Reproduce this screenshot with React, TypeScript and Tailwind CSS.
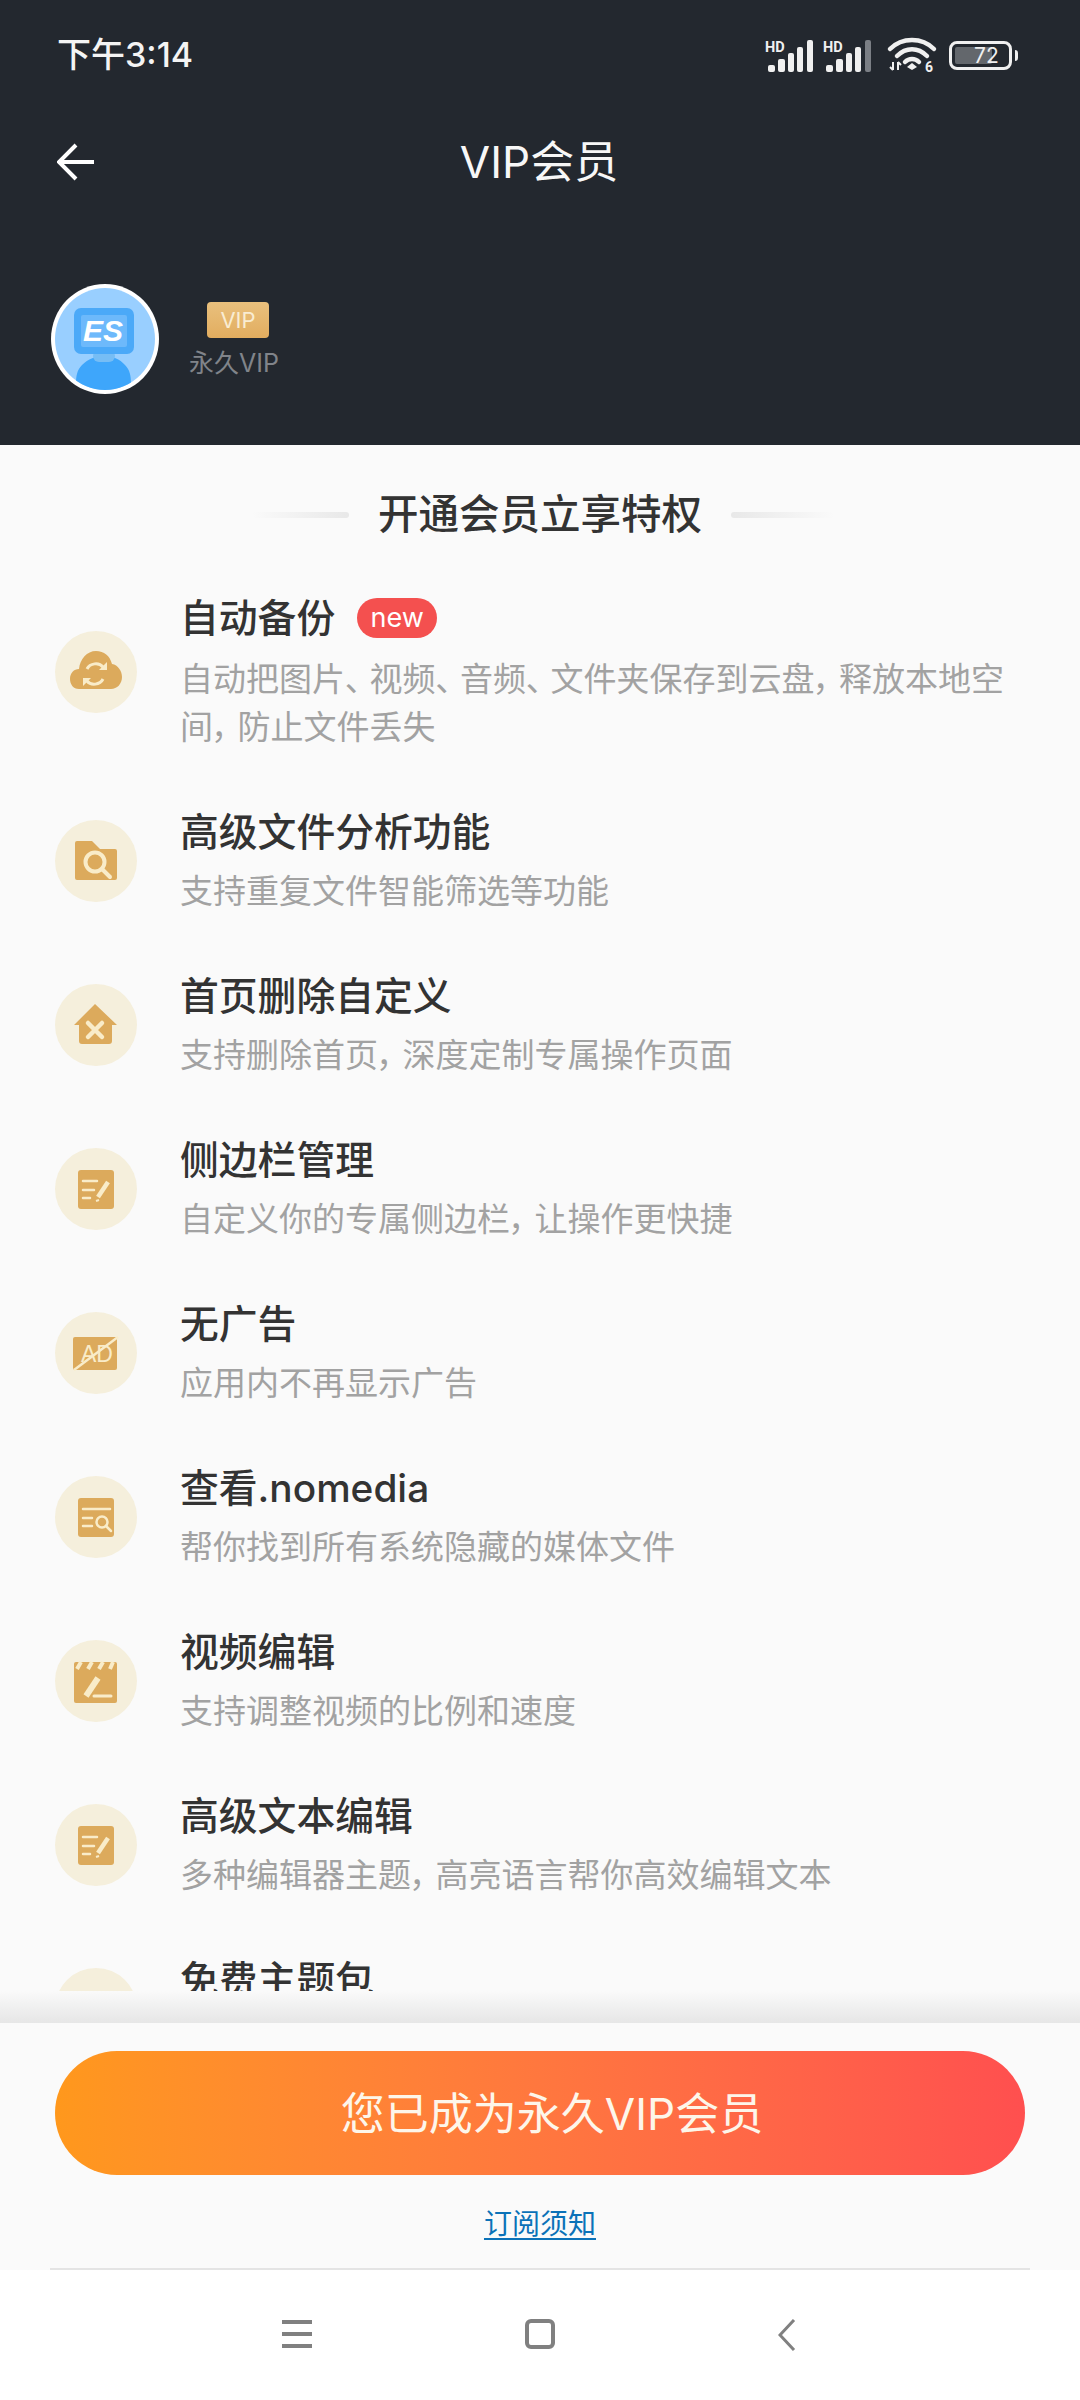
import React from "react";

const F = "#dcaa5c";
const L = "#f9ecc9";

const Signal = ({ dim }: { dim?: boolean }) => (
  <svg width="50" height="33" viewBox="0 0 50 33">
    <text x="0" y="13" fontSize="14.5" fontWeight="700" fontFamily="Roboto, sans-serif" fill="#f0f0f0">HD</text>
    <rect x="3" y="26" width="7" height="7" rx="2" fill="#f0f0f0" />
    <rect x="13" y="20" width="7" height="13" rx="2" fill="#f0f0f0" />
    <rect x="23" y="14" width="6" height="19" rx="2" fill="#f0f0f0" />
    <rect x="32" y="8" width="6" height="25" rx="2" fill="#f0f0f0" />
    <rect x="42" y="1" width="6" height="32" rx="2" fill={dim ? "#7b7f85" : "#f0f0f0"} />
  </svg>
);

const Wifi = () => (
  <svg className="overflow-visible" width="48" height="36" viewBox="0 0 48 36" fill="none">
    <path d="M2 12C14 0 34 0 46 12" stroke="#f0f0f0" strokeWidth="4.5" strokeLinecap="round" />
    <path d="M9 19C18 10 30 10 39 19" stroke="#f0f0f0" strokeWidth="4.5" strokeLinecap="round" />
    <path d="M17 25C21 21 27 21 31 25" stroke="#f0f0f0" strokeWidth="4.5" strokeLinecap="round" />
    <path d="M24 26l5 4-5 3-5-3z" fill="#f0f0f0" />
    <path d="M5 25v8M2 30l3 3M10 33v-8M10 25l3 3" stroke="#f0f0f0" strokeWidth="2" />
    <text x="37" y="35" fontSize="14" fontWeight="700" fontFamily="Roboto, sans-serif" fill="#f0f0f0">6</text>
  </svg>
);

const Battery = () => (
  <div className="flex items-center gap-[3px]">
    <div className="flex h-[29px] w-[63px] items-center rounded-[8px] border-[3px] border-[#f0f0f0] p-[3px]">
      <div className="flex h-full w-[72%] items-center justify-end rounded-[2px] bg-[#63676c]">
        <span className="mr-[-7px] text-[21px] leading-none text-[#f0f0f0]">72</span>
      </div>
    </div>
    <div className="h-[11px] w-[3px] rounded-r bg-[#f0f0f0]" />
  </div>
);

const Avatar = () => (
  <svg width="108" height="110" viewBox="0 0 108 110">
    <clipPath id="avatarClip">
      <ellipse cx="54" cy="55" rx="50" ry="51" />
    </clipPath>
    <ellipse cx="54" cy="55" rx="54" ry="55" fill="#ffffff" />
    <ellipse cx="54" cy="55" rx="50" ry="51" fill="#99cfff" />
    <g clipPath="url(#avatarClip)">
      <path d="M25 100c0-8 1-14 6-19 6-6 14-9 22-9s16 3 21 9c5 5 6 11 6 19v10H25z" fill="#3ea6fb" />
      <rect x="42" y="66" width="22" height="12" rx="6" fill="#76bdf5" />
      <rect x="23" y="24" width="60" height="46" rx="7" fill="#4ba9f8" />
      <rect x="30" y="31" width="46" height="32" rx="2" fill="#6db9fb" />
      <text x="32" y="57" fontSize="30" fontWeight="800" fontStyle="italic" fontFamily="'Liberation Sans', sans-serif" fill="#ffffff">ES</text>
    </g>
  </svg>
);

const EditGlyph = () => (
  <>
    <rect x="23" y="22" width="36" height="39" rx="3" fill={F} />
    <path d="M28 33h14M28 42h11M28 50h7" stroke={L} strokeWidth="2.5" strokeLinecap="round" />
    <path d="M43 49L53 34" stroke={L} strokeWidth="4.5" />
    <path d="M41 53l3-1" stroke={L} strokeWidth="2" />
  </>
);

const glyphs: Record<string, React.ReactNode> = {
  cloud: (
    <>
      <path d="M24 58C18 58 15 53 15 48c0-6 4-10 9-10 1-10 8-18 17-18 8 0 14 5 16 13 6 1 10 7 10 13 0 7-5 12-11 12z" fill={F} />
      <path d="M32 38c3-6 12-7 16-2M48 48c-3 6-12 7-16 2" stroke={L} strokeWidth="3" fill="none" />
      <path d="M52 31v8h-8zM28 55v-8h8z" fill={L} />
    </>
  ),
  folder: (
    <>
      <path d="M20 23a2 2 0 0 1 2-2h15l8 8h15a2 2 0 0 1 2 2v27a2 2 0 0 1-2 2H22a2 2 0 0 1-2-2z" fill={F} />
      <circle cx="40" cy="42" r="9.5" stroke={L} strokeWidth="4" fill="none" />
      <path d="M47 49l8 8" stroke={L} strokeWidth="4" strokeLinecap="round" />
    </>
  ),
  house: (
    <>
      <path d="M40 20L62 41H57V57a3 3 0 0 1-3 3H27a3 3 0 0 1-3-3V41H19z" fill={F} />
      <path d="M33 39l14 14M47 39L33 53" stroke={L} strokeWidth="4.5" strokeLinecap="round" />
    </>
  ),
  edit: <EditGlyph />,
  ad: (
    <>
      <rect x="18" y="25" width="44" height="33" rx="2" fill={F} />
      <text x="26" y="50" fontSize="23" fontFamily="'Liberation Sans', sans-serif" fill={L}>AD</text>
      <path d="M19 58L63 25" stroke={L} strokeWidth="2.5" />
    </>
  ),
  nomedia: (
    <>
      <rect x="23" y="22" width="36" height="39" rx="3" fill={F} />
      <path d="M28 33h27M28 42h9M28 50h9" stroke={L} strokeWidth="2.5" strokeLinecap="round" />
      <circle cx="47" cy="46" r="5.5" stroke={L} strokeWidth="2.5" fill="none" />
      <path d="M51 50l5 5" stroke={L} strokeWidth="2.5" strokeLinecap="round" />
    </>
  ),
  video: (
    <>
      <rect x="19" y="22" width="43" height="41" rx="2" fill={F} />
      <path d="M22 29l4-7M33 29l4-7M44 29l4-7M55 29l3-7" stroke={L} strokeWidth="4" />
      <path d="M31 56l12-18" stroke={L} strokeWidth="6" />
      <path d="M39 56h17" stroke={L} strokeWidth="3" strokeLinecap="round" />
    </>
  ),
  theme: <path d="M22 30l10-7 8 2 8-2 10 7-3 12H25z" fill={F} />,
};

const features = [
  { icon: "folder", title: "高级文件分析功能", desc: "支持重复文件智能筛选等功能" },
  { icon: "house", title: "首页删除自定义", desc: "支持删除首页，深度定制专属操作页面" },
  { icon: "edit", title: "侧边栏管理", desc: "自定义你的专属侧边栏，让操作更快捷" },
  { icon: "ad", title: "无广告", desc: "应用内不再显示广告" },
  { icon: "nomedia", title: "查看.nomedia", desc: "帮你找到所有系统隐藏的媒体文件" },
  { icon: "video", title: "视频编辑", desc: "支持调整视频的比例和速度" },
  { icon: "edit", title: "高级文本编辑", desc: "多种编辑器主题，高亮语言帮你高效编辑文本" },
];

const RowIcon = ({ name }: { name: string }) => (
  <div className="h-[82px] w-[82px] shrink-0 rounded-full bg-[#f5efdc]">
    <svg width="82" height="82" viewBox="0 0 82 82">{glyphs[name]}</svg>
  </div>
);

// the phone's font sets punctuation tighter than a full em
const Desc = ({ text, className }: { text: string; className: string }) => (
  <p className={`${className} text-[33px] leading-[48px] text-[#a2a2a2] [font-feature-settings:'palt']`}>
    {text.split(/([，、])/).map((part, i) =>
      part === "，" || part === "、" ? (
        <span key={i} className="mr-[8px]">{part}</span>
      ) : (
        part
      )
    )}
  </p>
);

export default function App() {
  return (
    <div className="flex h-[2400px] w-[1080px] flex-col overflow-hidden bg-[#fafafa] font-['Inter','Noto_Sans_CJK_SC',sans-serif]">
      {/* Header */}
      <header className="h-[445px] shrink-0 bg-[#23282f] text-white">
        <div className="flex items-start justify-between pl-[57px] pr-[62px] pt-[37px]">
          <span className="text-[34px] font-medium leading-[36px] text-[#f4f4f4]">下午3:14</span>
          <div className="flex items-center">
            <Signal />
            <div className="ml-[8px]"><Signal dim /></div>
            <div className="ml-[15px]"><Wifi /></div>
            <div className="ml-[13px]"><Battery /></div>
          </div>
        </div>
        <div className="mt-[61px] grid grid-cols-[1fr_auto_1fr] items-center pl-[57px] pr-[59px]">
          <svg width="38" height="38" viewBox="0 0 38 38" fill="none">
            <path d="M37 19H3M19 2L2 19l17 17" stroke="#ffffff" strokeWidth="4" />
          </svg>
          <h1 className="text-[44px] leading-[56px] text-[#f7f7f7]">VIP会员</h1>
        </div>
        <div className="ml-[51px] mt-[94px] flex items-center">
          <Avatar />
          <div className="ml-[30px] flex flex-col items-start pt-[2px]">
            <span className="ml-[18px] flex h-[36px] w-[62px] items-center justify-center rounded-[4px] bg-linear-to-b from-[#e9c07d] to-[#e2ad5f] text-[22px] text-[#f9ecd2]">VIP</span>
            <span className="mt-[10px] text-[25px] leading-[30px] text-[#80848a]">永久VIP</span>
          </div>
        </div>
      </header>

      {/* Features */}
      <main className="h-[1546px] shrink-0 overflow-hidden">
        <div className="ml-[6px] mt-[42px] flex items-center justify-center">
          <div className="h-[6px] w-[97px] rounded-full bg-linear-to-r from-transparent to-[#e8e8e8]" />
          <h2 className="mx-[29px] text-[40.5px] font-medium leading-[56px] text-[#333333]">开通会员立享特权</h2>
          <div className="h-[6px] w-[103px] rounded-full bg-linear-to-r from-[#e8e8e8] to-transparent" />
        </div>
        <div className="mt-[50px] flex flex-col gap-[56px] pl-[55px] pr-[58px]">
          <div className="flex items-center">
            <RowIcon name="cloud" />
            <div className="ml-[43px]">
              <div className="flex items-center">
                <span className="text-[38.8px] font-medium leading-[50px] text-[#333333]">自动备份</span>
                <span className="ml-[22px] flex h-[40px] w-[80px] items-center justify-center rounded-full bg-[#f4504f] text-[27px] text-white">new</span>
              </div>
              <Desc className="mt-[12px]" text="自动把图片、视频、音频、文件夹保存到云盘，释放本地空间，防止文件丢失" />
            </div>
          </div>
          {features.map((f) => (
            <div key={f.title} className="flex items-center">
              <RowIcon name={f.icon} />
              <div className="ml-[43px]">
                <div className="text-[38.8px] font-medium leading-[50px] text-[#333333]">{f.title}</div>
                <Desc className="mt-[10px]" text={f.desc} />
              </div>
            </div>
          ))}
          <div className="flex items-start">
            <div className="mt-[13px]"><RowIcon name="theme" /></div>
            <div className="ml-[43px] text-[38.8px] font-medium leading-[50px] text-[#333333]">免费主题包</div>
          </div>
        </div>
      </main>

      {/* Bottom action */}
      <div className="h-[32px] shrink-0 bg-linear-to-b from-[#fafafa] to-[#e6e6e6]" />
      <footer className="flex h-[247px] shrink-0 flex-col items-center pt-[28px]">
        <button className="flex h-[124px] w-[970px] items-center justify-center rounded-full bg-linear-to-r from-[#ff981c] to-[#ff4f4f] pl-[24px] pt-[2px] text-[44px] text-[#fdf6ea]">
          您已成为永久VIP会员
        </button>
        <a className="mt-[31px] text-[28px] leading-[36px] text-[#0b72b8] underline underline-offset-4">订阅须知</a>
        <div className="mt-auto h-[2px] w-[980px] bg-[#e4e4e4]" />
      </footer>

      {/* Android nav */}
      <nav className="flex flex-1 items-start bg-white pl-[282px] pt-[49px]">
        <svg width="30" height="30" viewBox="0 0 30 30">
          <path d="M0 3h30M0 15h30M0 27h30" stroke="#808080" strokeWidth="4" />
        </svg>
        <div className="ml-[213px] h-[30px] w-[30px] rounded-[6px] border-[4px] border-[#808080]" />
        <svg className="ml-[223px]" width="18" height="32" viewBox="0 0 18 32" fill="none">
          <path d="M16 1L2 16l14 15" stroke="#808080" strokeWidth="3" />
        </svg>
      </nav>
    </div>
  );
}
